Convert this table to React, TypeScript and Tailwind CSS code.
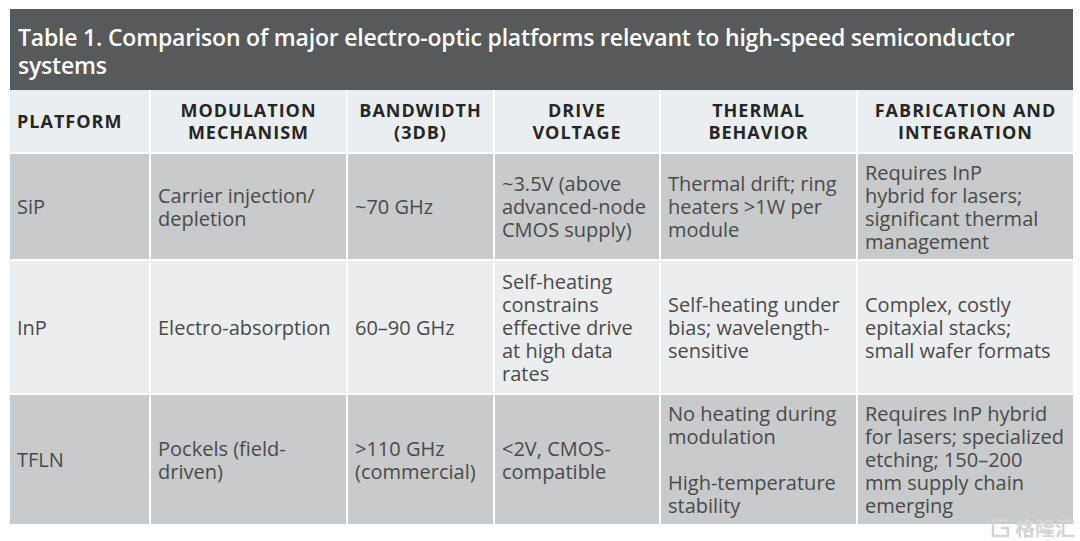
const headers = [
  ["PLATFORM"],
  ["MODULATION", "MECHANISM"],
  ["BANDWIDTH", "(3DB)"],
  ["DRIVE", "VOLTAGE"],
  ["THERMAL", "BEHAVIOR"],
  ["FABRICATION AND", "INTEGRATION"],
];

// each cell: paragraphs -> lines (line breaks follow the printed table)
type Row = { h: string; bg: string; cells: string[][][] };

const rows: Row[] = [
  {
    h: "h-[105px]",
    bg: "bg-[#c8cacb]",
    cells: [
      [["SiP"]],
      [["Carrier injection/", "depletion"]],
      [["~70 GHz"]],
      [["~3.5V (above", "advanced-node", "CMOS supply)"]],
      [["Thermal drift; ring", "heaters >1W per", "module"]],
      [["Requires InP", "hybrid for lasers;", "significant thermal", "management"]],
    ],
  },
  {
    h: "h-[132px]",
    bg: "bg-[#ebedee]",
    cells: [
      [["InP"]],
      [["Electro-absorption"]],
      [["60–90 GHz"]],
      [["Self-heating", "constrains", "effective drive", "at high data", "rates"]],
      [["Self-heating under", "bias; wavelength-", "sensitive"]],
      [["Complex, costly", "epitaxial stacks;", "small wafer formats"]],
    ],
  },
  {
    h: "h-[129px]",
    bg: "bg-[#c8cacb]",
    cells: [
      [["TFLN"]],
      [["Pockels (field-", "driven)"]],
      [[">110 GHz", "(commercial)"]],
      [["<2V, CMOS-", "compatible"]],
      [["No heating during", "modulation"], ["High-temperature", "stability"]],
      [["Requires InP hybrid", "for lasers; specialized", "etching; 150–200", "mm supply chain", "emerging"]],
    ],
  },
];

const cols = "grid-cols-[139px_195px_145px_164px_195px_1fr]";

export default function App() {
  return (
    <div className="relative w-[1080px] h-[541px] bg-white font-['Open_Sans',sans-serif]">
      <div className="pt-[9px] pl-[10px] w-[1073px]">
        <div className="bg-[#58595b] text-white text-[23px] leading-[28px] font-semibold pl-[8px] pt-[14px] h-[81px] tracking-[-0.2px] whitespace-nowrap">
          <span className="block">
            Table 1. Comparison of major electro-optic platforms relevant to high-speed semiconductor
          </span>
          <span className="block">systems</span>
        </div>
        <div className={`grid ${cols} gap-x-[2px] bg-white`}>
          {headers.map((lines, i) => (
            <div
              key={i}
              className={`h-[62px] bg-[#ebeef0] flex flex-col justify-center text-[#262626] font-bold text-[18px] leading-[22px] tracking-[1px] ${
                i === 0 ? "items-start pl-[7px]" : "items-center text-center"
              }`}
            >
              {lines.map((l) => (
                <span key={l}>{l}</span>
              ))}
            </div>
          ))}
        </div>
        {rows.map((r, ri) => (
          <div key={ri} className={`grid ${cols} gap-x-[2px] mt-[2px] bg-white`}>
            {r.cells.map((paras, ci) => (
              <div
                key={ci}
                className={`${r.h} ${r.bg} flex flex-col justify-center gap-[23px] px-[7px] text-[#4a4a4a] text-[20px] leading-[23px] whitespace-nowrap`}
              >
                {paras.map((lines, pi) => (
                  <p key={pi}>
                    {lines.map((l, li) => (
                      <span key={li} className="block">
                        {l}
                      </span>
                    ))}
                  </p>
                ))}
              </div>
            ))}
          </div>
        ))}
      </div>
      <div className="absolute right-[5px] bottom-[3px] flex items-center gap-[3px] text-[#d4d4d4]">
        <svg width="22" height="20" viewBox="0 0 22 20" fill="none" stroke="#d4d4d4" strokeWidth="2.4">
          <path d="M18 2H3v16h15v-8h-7" />
        </svg>
        <span className="text-[20px] leading-[20px] font-bold font-['Noto_Sans_CJK_SC',sans-serif]">格隆汇</span>
      </div>
    </div>
  );
}
